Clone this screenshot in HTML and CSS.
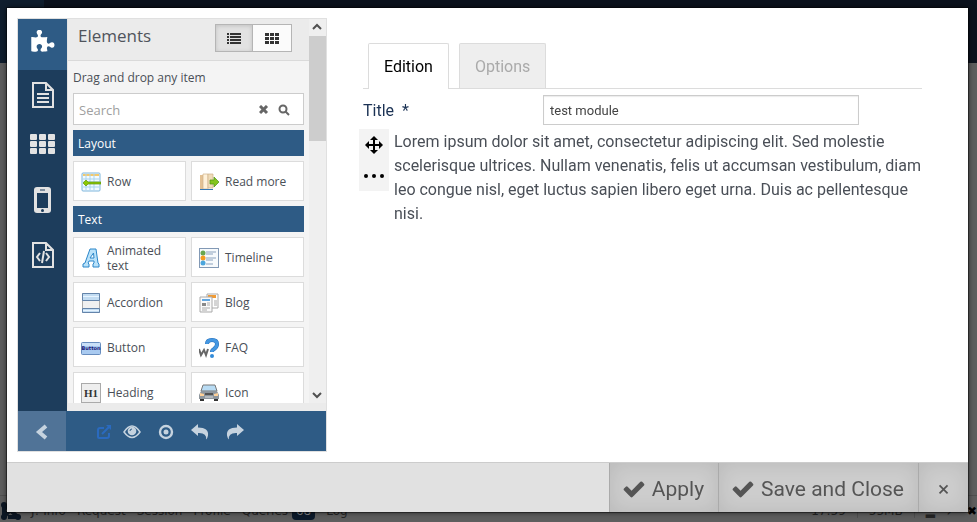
FILE: index.html
```html
<!DOCTYPE html>
<html lang="en">
<head>
<meta charset="utf-8">
<title>Module editor</title>
<link rel="stylesheet" href="styles.css">
</head>
<body>
<div class="page">
  <div class="page-top"></div>
  <div class="page-body"></div>
  <div class="debug-bar">
    <svg class="debug-logo" viewBox="0 0 22 20"><path d="M4 4l14 12M4 16L10 9M4 3v13M8 16h11" stroke="#0c1724" stroke-width="4" fill="none"/><circle cx="4" cy="4" r="3"/><circle cx="4" cy="16" r="3"/><circle cx="18" cy="16" r="3"/></svg>
    <span>J! Info</span><span>Request</span><span>Session</span><span>Profile</span>
    <span>Queries <b class="debug-count">68</b></span><span>Log</span>
    <span class="debug-end">17:59</span><span class="debug-cell">55MB</span><span class="debug-cell">▂</span><span>↗</span><span class="debug-close">✖</span>
  </div>
</div>

<div class="modal" role="dialog" aria-label="Module editor">
  <div class="modal-body">
    <aside class="builder">
      <div class="builder-main">
        <nav class="rail">
          <button class="rail-btn rail-active" aria-label="Elements"><svg class="ic-puzzle" viewBox="0 0 1792 1792"><path fill="#fff" d="M1755 1083q0 81-44.500 135t-123.500 54q-41 0-77.500-17.500t-59-38-56.500-38-71-17.500q-110 0-110 124 0 39 16 115t15 115v5q-22 0-33 1-34 3-97.500 11.500t-115.500 13.500-98 5q-61 0-103-26.500t-42-83.500q0-37 17.500-71t38-56.500 38-59 17.500-77.500q0-79-54-123.500t-135-44.500q-84 0-143 45.500t-59 127.500q0 43 15 83t33.500 64.500 33.500 53 15 50.500q0 45-46 89-37 35-117 35-95 0-245-24-9-2-27.500-4t-27.500-4l-13-2q-1 0-3-1-2 0-2-1v-1024q2 1 17.500 3.500t34 5 21.500 3.500q150 24 245 24 80 0 117-35 46-44 46-89 0-22-15-50.500t-33.500-53-33.500-64.500-15-83q0-82 59-127.500t144-45.500q80 0 134 44.500t54 123.500q0 41-17.500 77.500t-38 59-38 56.500-17.500 71q0 57 42 83.500t103 26.500q64 0 180-15t163-17v2q-1 2-3.500 17.500t-5 34-3.500 21.500q-24 150-24 245 0 80 35 117 44 46 89 46 22 0 50.500-15t53-33.500 64.500-33.500 83-15q82 0 127.500 59t45.500 143z"/></svg></button>
          <button class="rail-btn" aria-label="Page"><svg width="22" height="26" viewBox="0 0 22 26" fill="none" stroke="#e2e2e2" stroke-width="2"><path d="M1 1h13l7 7v17H1zM14 1v7h7"/><path d="M5 12h12M5 16h12M5 20h12"/></svg></button>
          <button class="rail-btn" aria-label="Layouts"><svg width="26" height="20" viewBox="0 0 26 20" fill="#e2e2e2"><rect x="0" width="7" height="6" rx="1"/><rect x="9" width="7" height="6" rx="1"/><rect x="18" width="7" height="6" rx="1"/><rect x="0" y="7" width="7" height="6" rx="1"/><rect x="9" y="7" width="7" height="6" rx="1"/><rect x="18" y="7" width="7" height="6" rx="1"/><rect x="0" y="14" width="7" height="6" rx="1"/><rect x="9" y="14" width="7" height="6" rx="1"/><rect x="18" y="14" width="7" height="6" rx="1"/></svg></button>
          <button class="rail-btn" aria-label="Mobile"><svg width="17" height="26" viewBox="0 0 17 26"><rect width="17" height="26" rx="3" fill="#e2e2e2"/><path d="M6 3h5" stroke="#1d3d5c"/><path d="M3 6h11v15H3z" fill="#1d3d5c"/><circle cx="8.500" cy="23.500" r="1.500" fill="#1d3d5c"/></svg></button>
          <button class="rail-btn" aria-label="Code"><svg width="22" height="26" viewBox="0 0 22 26" fill="none" stroke="#e2e2e2" stroke-width="2"><path d="M1 1h13l7 7v17H1zM14 1v7h7"/><path d="M8 11l-3 4 3 4M14 11l3 4-3 4M12 9l-2 12"/></svg></button>
        </nav>
        <section class="library">
          <div class="library-view">
            <header class="library-head">
              <h2>Elements</h2>
              <div class="view-switch">
                <button class="on" aria-label="List"><svg width="14" height="12" viewBox="0 0 14 12" fill="#333"><path d="M0 1h2v2H0zM3 1h11v2H3zM0 4h2v2H0zM3 4h11v2H3zM0 7h2v2H0zM3 7h11v2H3zM0 10h2v2H0zM3 10h11v2H3z"/></svg></button>
                <button aria-label="Grid"><svg width="14" height="12" viewBox="0 0 14 12" fill="#333"><path d="M0 1h4v3H0zM5 1h4v3H5zM10 1h4v3h-4zM0 5h4v3H0zM5 5h4v3H5zM10 5h4v3h-4zM0 9h4v3H0zM5 9h4v3H5zM10 9h4v3h-4z"/></svg></button>
              </div>
            </header>
            <div class="library-list">
              <label class="hint" for="search">Drag and drop any item</label>
              <div class="search">
                <input id="search" type="text" placeholder="Search">
                <button aria-label="Clear"><svg width="10" height="10" viewBox="0 0 10 10"><path d="M1 1l7 7M8 1L1 8" stroke="#666" stroke-width="3"/></svg></button>
                <button aria-label="Find"><svg width="12" height="12" viewBox="0 0 12 12" fill="none" stroke="#666" stroke-width="2"><circle cx="5" cy="5" r="3.500"/><path d="M7.500 7.500L11 11"/></svg></button>
              </div>
              <h3>Layout</h3>
              <div class="cards">
                <button class="card"><svg viewBox="0 0 20 20"><rect x="1" y="1" width="18" height="18" rx="1" fill="#f2faff" stroke="#7fb6dc"/><path d="M2 2h16v2H2z" fill="#f4c96c"/><path d="M5 2v16M9 2v16M13 2v16M2 7h16M2 10h16M2 15h16" stroke="#a9d4ee"/><path d="M2 11l3-3 2 2h13v2H7l-2 2z" fill="#8cc800" stroke="#5e9410" stroke-width=".7"/></svg><span>Row</span></button>
                <button class="card"><svg viewBox="0 0 20 20"><path d="M1 3h4v14H1z" fill="#e3c194"/><path d="M4 2h5v15H4z" fill="#fff1d9" stroke="#ceb28a" stroke-width=".7"/><path d="M9 2h5v14H9z" fill="#f0dcb9" stroke="#ceb28a" stroke-width=".7"/><path d="M1 17h13v1H1z" fill="#3578b5"/><path d="M11 8h4V5l5 5-5 5v-3h-4z" fill="#83c51d" stroke="#4d9416" stroke-width=".7"/></svg><span>Read more</span></button>
              </div>
              <h3>Text</h3>
              <div class="cards">
                <button class="card"><svg viewBox="0 0 20 20"><path d="M2 19v-3l2-1L9 1h6l2 14 1 1v3h-6v-3l1-1v-2H8l-1 2 1 1v3zM9 10h4l-.500-5z" fill="#b9e2fa" stroke="#2b86c9"/></svg><span>Animated text</span></button>
                <button class="card"><svg viewBox="0 0 20 20"><rect x=".5" y=".5" width="19" height="19" fill="#f7fafc" stroke="#8299b5"/><path d="M7 4h10M7 6h7M7 10h10M7 12h7M7 16h7" stroke="#8ba2bd"/><circle cx="4" cy="5" r="2.500" fill="#68a650"/><circle cx="4" cy="10" r="2.500" fill="#f39b22"/><circle cx="4" cy="15" r="2.500" fill="#4aa5dd"/></svg><span>Timeline</span></button>
                <button class="card"><svg viewBox="0 0 20 20"><path d="M1.500 .5h17v19h-17z" fill="#f0f0f0" stroke="#aaa"/><path d="M1.500 .5h17v7h-17zM1.500 15.500h17v4h-17z" fill="#c2dcf2" stroke="#6484aa"/><path d="M2 3.500h16M2 17.500h16" stroke="#e7f4ff"/></svg><span>Accordion</span></button>
                <button class="card"><svg viewBox="0 0 20 20"><path d="M8 1h11v14H8z" fill="#fff" stroke="#aaa"/><path d="M9 2h8v3H9z" fill="#f09b35"/><path d="M15 8h3M15 10h3M15 12h3" stroke="#aaa"/><path d="M1 4h12v15H1z" fill="#fafafa" stroke="#aaa"/><path d="M3 6h8v2H3z" fill="#62a7e1"/><path d="M3 10h4v3H3z" fill="#888"/><path d="M8 10h3M8 12h3M3 15h8M3 17h5" stroke="#aaa"/></svg><span>Blog</span></button>
                <button class="card"><svg viewBox="0 0 20 20"><rect x=".5" y="4.500" width="19" height="12" rx="1" fill="#a9caf0" stroke="#688dbe"/><path d="M1 5h18v3H1z" fill="#c9e0f8"/><text x="10" y="12" text-anchor="middle" font-family="DejaVu Sans" font-weight="bold" font-size="5" fill="#181878">Button</text></svg><span>Button</span></button>
                <button class="card"><svg viewBox="0 0 20 20"><path d="M8 6Q8 2 13 2t5 4q0 3-3 5-2 1-2 3" fill="none" stroke="#246fb9" stroke-width="4"/><path d="M8 6Q8 2 13 2t5 4q0 3-3 5-2 1-2 3" fill="none" stroke="#4497e2" stroke-width="3"/><circle cx="13" cy="18" r="2" fill="#338bd8"/><path d="M0 11l2 6 3-5 2 5 2-6" fill="none" stroke="#666" stroke-width="2"/></svg><span>FAQ</span></button>
                <button class="card"><svg viewBox="0 0 20 20"><rect x=".5" y=".5" width="19" height="19" fill="#eee" stroke="#aaa"/><text x="10" y="14" text-anchor="middle" font-family="Liberation Serif" font-weight="bold" font-size="11" fill="#333">H1</text></svg><span>Heading</span></button>
                <button class="card"><svg viewBox="0 0 20 20"><path d="M4 2h12l2 6H2z" fill="#b9dcf4" stroke="#777"/><path d="M2 8h16l2 4v4H0v-4z" fill="#8e969d"/><path d="M1 16h4v2H1zM15 16h4v2h-4z" fill="#333"/><path d="M1 10l4 1v2H1zM19 10l-4 1v2h4z" fill="#ffd199"/><path d="M6 10h8v2H6z" fill="#555"/><path d="M6 14h8" stroke="#ddd"/></svg><span>Icon</span></button>
              </div>
            </div>
          </div>
          <div class="scrollbar">
            <svg viewBox="0 0 17 17"><path d="M4 10l4-4 4 4" fill="none" stroke="#505050" stroke-width="2"/></svg>
            <div class="thumb"></div>
            <svg viewBox="0 0 17 17"><path d="M4 7l4 4 4-4" fill="none" stroke="#505050" stroke-width="2"/></svg>
          </div>
        </section>
      </div>
      <div class="toolbar">
        <button class="collapse" aria-label="Collapse"><svg width="14" height="16" viewBox="0 0 14 16"><path d="M11 2L4 8l7 6" fill="none" stroke="#c6d3df" stroke-width="4"/></svg></button>
        <div class="tools">
          <button aria-label="Open"><svg width="16" height="16" viewBox="0 0 16 16" fill="none" stroke="#2a6abf" stroke-width="2"><path d="M8 4H4Q2 4 2 6v7q0 1 1 1h8q2 0 2-2V9M6 10l8-8"/><path d="M10 1h5v5z" fill="#2a6abf" stroke="none"/></svg></button>
          <button aria-label="Preview"><svg width="18" height="14" viewBox="0 0 18 14"><path d="M1 7q8-12 16 0-8 11-16 0z" fill="none" stroke="#c6d3df" stroke-width="1.500"/><circle cx="9" cy="6" r="4.300" fill="#c6d3df"/><path d="M7 6q0-2 2-2" fill="none" stroke="#2e5b85"/></svg></button>
          <button aria-label="Focus"><svg width="16" height="16" viewBox="0 0 16 16"><circle cx="8" cy="8" r="6" fill="none" stroke="#c6d3df" stroke-width="2.400"/><circle cx="8" cy="8" r="2.500" fill="#c6d3df"/></svg></button>
          <button aria-label="Undo"><svg width="18" height="16" viewBox="0 0 18 16"><path d="M0 6l7-6v3.500q11 0 10 8-.500 3-2 4 1-7-8-6.500V12z" fill="#c6d3df"/></svg></button>
          <button aria-label="Redo"><svg width="18" height="16" viewBox="0 0 18 16"><path d="M18 6l-7-6v3.500q-11 0-10 8 .500 3 2 4-1-7 8-6.500V12z" fill="#c6d3df"/></svg></button>
        </div>
      </div>
    </aside>

    <main class="editor">
      <div class="tabs" role="tablist">
        <button class="tab tab-on" role="tab" aria-selected="true">Edition</button>
        <button class="tab" role="tab" aria-selected="false">Options</button>
      </div>
      <div class="field">
        <label for="title">Title &nbsp;*</label>
        <input id="title" type="text" value="test module">
      </div>
      <div class="block">
        <div class="handle">
          <button aria-label="Move"><svg width="20" height="20" viewBox="0 0 20 20"><path d="M10 4v12M4 10h12" stroke="#000" stroke-width="2"/><path d="M10 1l4 4H6zM10 19l4-4H6zM1 10l4-4v8zM19 10l-4-4v8z"/></svg></button>
          <button aria-label="More"><svg width="20" height="20" viewBox="0 0 20 20"><circle cx="2" cy="10" r="2"/><circle cx="10" cy="10" r="2"/><circle cx="18" cy="10" r="2"/></svg></button>
        </div>
        <p>Lorem ipsum dolor sit amet, consectetur adipiscing elit. Sed molestie scelerisque ultrices. Nullam venenatis, felis ut accumsan vestibulum, diam leo congue nisl, eget luctus sapien libero eget urna. Duis ac pellentesque nisi.</p>
      </div>
    </main>
  </div>
  <footer class="modal-foot">
    <button class="apply"><svg class="check" viewBox="0 0 1792 1792"><path d="M1671 566q0 40-28 68l-724 724-136 136q-28 28-68 28t-68-28l-136-136-362-362q-28-28-28-68t28-68l136-136q28-28 68-28t68 28l294 295 656-657q28-28 68-28t68 28l136 136q28 28 28 68z"/></svg>Apply</button>
    <button class="save"><svg class="check" viewBox="0 0 1792 1792"><path d="M1671 566q0 40-28 68l-724 724-136 136q-28 28-68 28t-68-28l-136-136-362-362q-28-28-28-68t28-68l136-136q28-28 68-28t68 28l294 295 656-657q28-28 68-28t68 28l136 136q28 28 28 68z"/></svg>Save and Close</button>
    <button class="close" aria-label="Close">×</button>
  </footer>
</div>
</body>
</html>
```
FILE: styles.css
```css
* { box-sizing: border-box; }
body { margin: 0; font-family: Roboto, sans-serif; color: #4a4f57; }
button { border: 0; padding: 0; margin: 0; background: none; font: inherit; color: inherit; display: flex; align-items: center; justify-content: center; }
svg { display: block; flex: none; }
h2, h3, p { margin: 0; font-weight: normal; }

.page { height: 100vh; display: flex; flex-direction: column; background: #5e5e5e; overflow: hidden; }
.page-top { flex: 0 0 63px; background: linear-gradient(to right, #101e2e 44px, #0c121d 44px); }
.page-body { flex: 1; }
.debug-bar { display: flex; align-items: center; gap: 11px; height: 27px; padding-top: 3px; border-top: 1px solid #505050; font: 12px "DejaVu Sans", sans-serif; color: #252525; white-space: nowrap; }
.debug-logo { width: 22px; height: 20px; margin-right: -2px; fill: #0c1724; }
.debug-count { background: #0c1a2b; color: #888; border-radius: 4px; padding: 2px 4px; font-weight: normal; }
.debug-end { margin-left: auto; }
.debug-cell { border-left: 1px solid #505050; padding-left: 11px; }
.debug-close { color: #000; }

.modal { position: fixed; top: 8px; left: 7px; right: 9px; bottom: 10px; display: flex; flex-direction: column; background: #fff; box-shadow: 0 0 6px rgba(0,0,0,.7), 0 0 0 1px rgba(0,0,0,.4); }
.modal-body { flex: 1; display: flex; align-items: stretch; min-height: 0; padding: 10px 46px 10px 10px; }

.builder { flex: 0 0 310px; min-width: 0; display: flex; flex-direction: column; border: 1px solid #e0e0e0; font-family: "Open Sans", sans-serif; font-size: 12px; }
.builder-main { flex: 1; display: flex; min-height: 0; }
.rail { flex: 0 0 49px; background: #1d3d5c; }
.rail-btn { width: 100%; height: 54px; }
.rail-btn:nth-child(2), .rail-btn:nth-child(3) { height: 49px; }
.rail-btn:nth-child(4) { height: 64px; }
.rail-btn:nth-child(5) { height: 46px; }
.rail-active { height: 51px; background: #2e5b85; }
.ic-puzzle { width: 25px; height: 25px; margin-bottom: 5px; }
.library { flex: 1; display: flex; min-width: 0; background: #f4f4f4; border-left: 1px solid #e4e4e4; border-bottom: 8px solid #ebebeb; }
.library-view { flex: 1; min-width: 0; overflow: hidden; }
.library-head { display: flex; justify-content: space-between; align-items: flex-start; height: 42px; padding: 5px 17px 0 10px; background: #ebebeb; border-bottom: 1px solid #dadada; }
.library-head h2 { font-size: 17px; line-height: 24px; color: #50545c; }
.view-switch { display: flex; border: 1px solid #b5b5b5; }
.view-switch button { width: 38px; height: 26px; background: #fbfbfb; }
.view-switch .on { width: 37px; background: #e2e2e2; border-right: 1px solid #b5b5b5; box-shadow: inset 0 1px 4px rgba(0,0,0,.15); }
.library-list { display: flex; flex-direction: column; gap: 5px; padding: 5px; }
.hint { padding-top: 2px; line-height: 20px; }
.search { display: flex; align-items: center; gap: 9px; height: 32px; padding: 1px 13px 0 5px; border: 1px solid #ccc; background: #fff; }
.search input { flex: 1; min-width: 0; border: 0; padding: 0; background: none; font: 13px "Open Sans", sans-serif; }
.search input::placeholder { color: #a0a0a0; }
h3 { padding: 1px 5px 0; background: #2e5b85; color: #fff; font-size: 12px; line-height: 25px; }
.cards { display: grid; grid-template-columns: 1fr 1fr; gap: 5px; }
.card { justify-content: flex-start; gap: 6px; height: 40px; padding: 1px 7px 0; background: #fff; border: 1px solid #dcdcdc; text-align: left; line-height: 15px; }
.card svg { width: 20px; height: 20px; }
.scrollbar { flex: 0 0 17px; display: flex; flex-direction: column; background: #efefef; }
.scrollbar svg { width: 17px; height: 17px; }
.scrollbar svg:last-child { margin-top: auto; }
.thumb { height: 105px; background: #cdcdcd; }
.toolbar { display: flex; height: 40px; background: #2e5b85; }
.collapse { width: 48px; padding-top: 1px; background: #507397; }
.tools { display: flex; align-items: center; gap: 17px; padding: 2px 0 0 30px; }
.tools button:nth-child(2) { margin-left: -6px; }

.editor { flex: 1; min-width: 0; padding: 25px 0 0 36px; }
.tabs { display: flex; gap: 10px; padding-left: 5px; border-bottom: 1px solid #dcdcdc; }
.tab { height: 45px; padding: 0 15px; border: 1px solid #dcdcdc; border-bottom: 0; border-radius: 2px 2px 0 0; background: #eee; color: #aaa; font-size: 16px; }
.tab-on { height: 46px; margin-bottom: -1px; background: #fff; color: #000; }
.field { display: grid; grid-template-columns: 180px 316px; align-items: center; margin-top: 6px; font-size: 16px; color: #1b3254; }
.field input { height: 30px; padding: 0 6px; border: 1px solid #ccc; box-shadow: inset 0 1px 1px rgba(0,0,0,.08); font: 13px Roboto, sans-serif; color: #444; }
.block { display: flex; align-items: flex-start; gap: 5px; margin: 4px 0 0 -4px; }
.handle { flex: 0 0 30px; background: #f3f3f3; }
.handle button { width: 30px; height: 31px; }
.block p { padding-top: 1px; font-size: 16px; line-height: 24px; }

.modal-foot { display: flex; justify-content: flex-end; height: 50px; background: #e1e1e1; border-top: 1px solid #ccc; color: #555; font-size: 21px; }
.modal-foot button { gap: 6px; padding: 2px 14px 0 12px; background: #cdcdcd; border-left: 1px solid #aaa; box-shadow: inset 0 0 20px rgba(0,0,0,.1); }
.modal-foot .close { width: 50px; padding: 2px 0 0; }
.check { width: 24px; height: 24px; fill: #555; }
```
